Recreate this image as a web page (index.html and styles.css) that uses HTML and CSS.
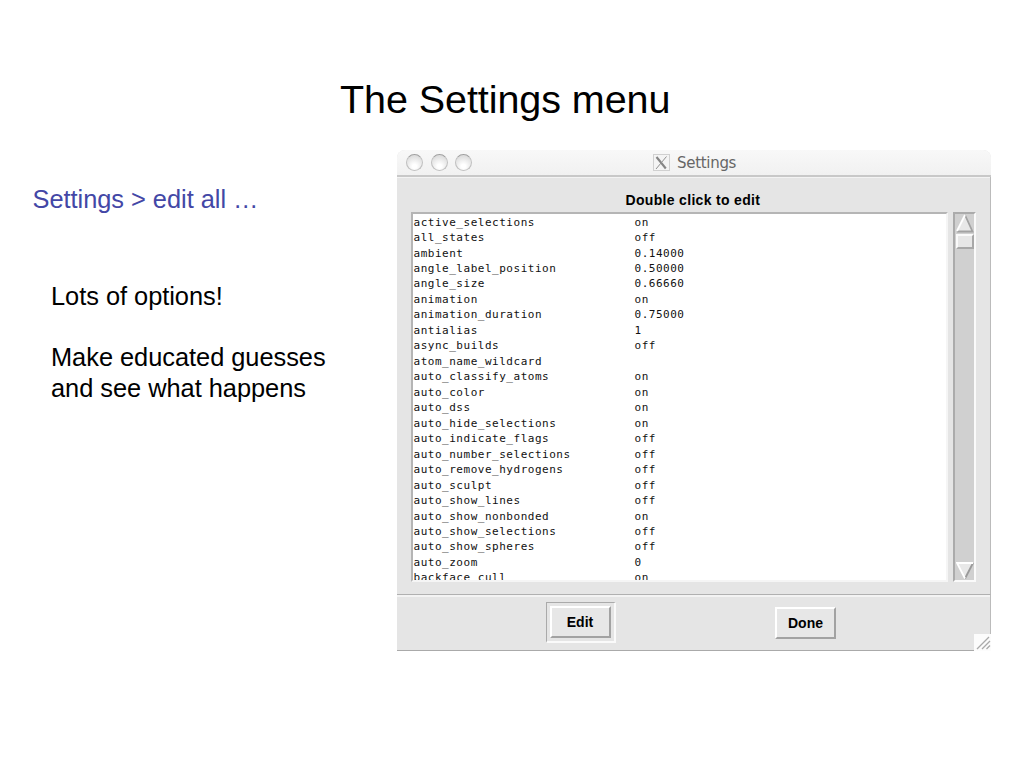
FILE: index.html
```html
<!DOCTYPE html>
<html lang="en">
<head>
<meta charset="utf-8">
<title>The Settings menu</title>
<link rel="stylesheet" href="styles.css">
</head>
<body>
<main class="slide">
  <h1 class="title">The Settings menu</h1>
  <div class="content">
    <section class="notes">
      <p class="path">Settings &gt; edit all …</p>
      <p class="note">Lots of options!</p>
      <p class="note">Make educated guesses<br>and see what happens</p>
    </section>
    <section class="window">
      <header class="titlebar">
        <div class="lights"><i class="light"></i><i class="light"></i><i class="light"></i></div>
        <div class="caption">
          <svg class="xicon" width="17" height="17" viewBox="0 0 17 17"><rect x=".5" y=".5" width="16" height="16" fill="#f4f4f4" stroke="#d0d0d0"/><path d="M3.5 3L12.8 14.5" stroke="#858585" stroke-width="2.1"/><path d="M13.5 2.5L3 15" stroke="#909090" stroke-width="1"/></svg>
          <span>Settings</span>
        </div>
      </header>
      <div class="pane">
        <h2 class="hint">Double click to edit</h2>
        <div class="listing">
          <ul class="list">
            <li><span>active_selections</span><span>on</span></li>
            <li><span>all_states</span><span>off</span></li>
            <li><span>ambient</span><span>0.14000</span></li>
            <li><span>angle_label_position</span><span>0.50000</span></li>
            <li><span>angle_size</span><span>0.66660</span></li>
            <li><span>animation</span><span>on</span></li>
            <li><span>animation_duration</span><span>0.75000</span></li>
            <li><span>antialias</span><span>1</span></li>
            <li><span>async_builds</span><span>off</span></li>
            <li><span>atom_name_wildcard</span><span></span></li>
            <li><span>auto_classify_atoms</span><span>on</span></li>
            <li><span>auto_color</span><span>on</span></li>
            <li><span>auto_dss</span><span>on</span></li>
            <li><span>auto_hide_selections</span><span>on</span></li>
            <li><span>auto_indicate_flags</span><span>off</span></li>
            <li><span>auto_number_selections</span><span>off</span></li>
            <li><span>auto_remove_hydrogens</span><span>off</span></li>
            <li><span>auto_sculpt</span><span>off</span></li>
            <li><span>auto_show_lines</span><span>off</span></li>
            <li><span>auto_show_nonbonded</span><span>on</span></li>
            <li><span>auto_show_selections</span><span>off</span></li>
            <li><span>auto_show_spheres</span><span>off</span></li>
            <li><span>auto_zoom</span><span>0</span></li>
            <li><span>backface_cull</span><span>on</span></li>
          </ul>
          <div class="scrollbar">
            <svg width="18" height="19" viewBox="0 0 18 19"><path d="M9 1L1 18H17Z" fill="#e8e8e8"/><path d="M9 1L16.5 17.5H1" fill="none" stroke="#a2a2a2" stroke-width="1.8"/><path d="M1 17L9 1" stroke="#fff" stroke-width="1.8"/></svg>
            <div class="thumb"></div>
            <svg class="down" width="18" height="18" viewBox="0 0 18 18"><path d="M1 1H17L9 17Z" fill="#e8e8e8"/><path d="M17 1L9 16.5" stroke="#999" stroke-width="1.8"/><path d="M17 1H1L9 16.5" fill="none" stroke="#fff" stroke-width="1.8"/></svg>
          </div>
        </div>
      </div>
      <footer class="actions">
        <div class="cell"><span class="default-ring"><button class="button">Edit</button></span></div>
        <div class="cell done"><button class="button">Done</button></div>
        <svg class="grip" width="17" height="17" viewBox="0 0 17 17"><rect width="17" height="17" fill="#fcfcfc"/><path d="M3 15L15 3M8 15L16 7M12.5 15L16 11.5" stroke="#aaa" stroke-width="1.3"/></svg>
      </footer>
    </section>
  </div>
</main>
</body>
</html>
```
FILE: styles.css
```css
* { box-sizing: border-box; }
body { margin: 0; background: #fff; color: #000; font-family: "Liberation Sans", Arial, sans-serif; }
.slide { width: 1024px; height: 768px; overflow: hidden; padding-top: 76px; }
.title { margin: 0 0 0 340px; height: 74px; font-size: 39.5px; line-height: 46px; font-weight: 400; letter-spacing: -0.07px; white-space: nowrap; }
.content { display: grid; grid-template-columns: 397px 594px; }
.notes { padding: 34px 0 0 51px; font-size: 25.4px; line-height: 30.4px; letter-spacing: -0.03px; white-space: nowrap; }
.path { margin: 0 0 67px -18.5px; color: #4347a6; }
.note { margin: 0 0 30.4px; }
.window { display: flex; flex-direction: column; height: 501px; background: #e5e5e5; border-radius: 8px 8px 0 0; overflow: hidden; }
.titlebar { display: flex; align-items: center; height: 27px; background: linear-gradient(#f8f8f8, #f1f1f1); border-bottom: 2px solid #c8c8c8; box-shadow: 0 1px #f3f3f3; }
.lights { display: flex; gap: 7.5px; width: 256px; padding-left: 9px; }
.light { width: 17px; height: 17px; border-radius: 50%; border: 1.5px solid #c0c0c0; border-top-color: #a0a0a0; background: radial-gradient(circle at 50% 75%, #fff 15%, #dedede 75%); }
.caption { display: flex; align-items: center; gap: 7px; color: #666; }
.caption span { font: 15px "DejaVu Sans", sans-serif; letter-spacing: -0.3px; }
.pane { height: 418px; padding: 14px 13px 0 14px; border-right: 1px solid #bbb; border-bottom: 1px solid #b0b0b0; box-shadow: 0 2px #f3f3f3; }
.hint { margin: 0; padding-left: 214.5px; height: 21px; font-size: 14px; line-height: 18px; font-weight: 700; letter-spacing: 0.32px; white-space: nowrap; }
.listing { display: flex; gap: 5px; height: 370px; }
.list { width: 537px; margin: 0; padding: 0.6px 0 0; list-style: none; overflow: hidden; background: #fff; border: 2px solid #b5b5b5; border-right-color: #f5f5f5; border-bottom-color: #f5f5f5; font-family: "DejaVu Sans Mono", monospace; font-size: 11px; letter-spacing: 0.52px; line-height: 15.48px; color: #111; }
.list li { display: grid; grid-template-columns: 221px 1fr; height: 15.48px; padding-left: 0.5px; white-space: pre; }
.scrollbar { display: flex; flex-direction: column; width: 23px; background: #d0d0d0; border: 2px solid #ababab; border-right-color: #fafafa; border-bottom-color: #fafafa; }
.scrollbar svg { display: block; flex: none; margin-left: 1px; }
.thumb { width: 18px; height: 15px; margin: 1px 0 0 1px; background: #e7e7e7; border: 2px solid #fafafa; border-right-color: #a8a8a8; border-bottom-color: #a8a8a8; }
.scrollbar .down { margin-top: auto; }
.actions { position: relative; flex: 1; display: flex; align-items: center; border-right: 1px solid #bbb; border-bottom: 1px solid #aaa; }
.cell { width: 183px; margin-left: 92px; display: flex; justify-content: center; }
.cell.done { margin-left: 42px; }
.default-ring { padding: 3px; border: 1px solid #aaa; border-right: 2px solid #fafafa; border-bottom: 2px solid #fafafa; }
.button { display: block; width: 61px; height: 32px; padding: 0; background: #e7e7e7; border: 2px solid #fff; border-right-color: #a2a2a2; border-bottom-color: #a2a2a2; border-radius: 0; font: 700 14px "Liberation Sans", Arial, sans-serif; color: #000; }
.grip { position: absolute; right: -1px; bottom: -1px; }
```
